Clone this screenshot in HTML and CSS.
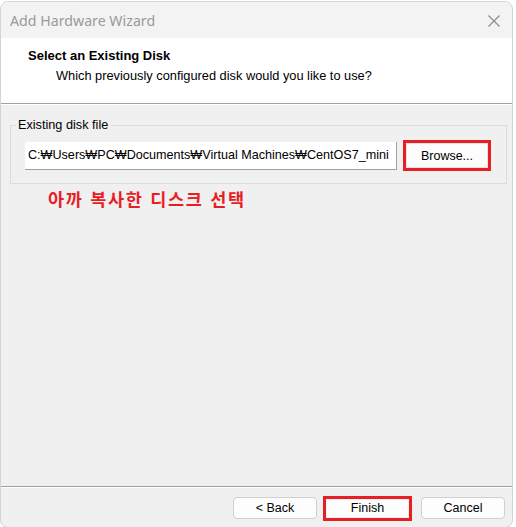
FILE: index.html
```html
<!DOCTYPE html>
<html lang="ko">
<head>
<meta charset="utf-8">
<title>Add Hardware Wizard</title>
<link rel="stylesheet" href="styles.css">
</head>
<body>
<div class="window">
  <div class="titlebar">
    <span class="title">Add Hardware Wizard</span>
    <svg class="close" width="12" height="12" viewBox="0 0 12 12"><path d="M0.5 0.5 L11.5 11.5 M11.5 0.5 L0.5 11.5" stroke="#8a8a8a" stroke-width="1.1" fill="none"/></svg>
  </div>
  <div class="header">
    <div class="h-title">Select an Existing Disk</div>
    <div class="h-sub">Which previously configured disk would you like to use?</div>
  </div>
  <div class="body">
    <fieldset class="group">
      <legend>Existing disk file</legend>
      <div class="row">
        <div class="input">C:₩Users₩PC₩Documents₩Virtual Machines₩CentOS7_mini</div>
        <div class="hl"><button class="btn browse">Browse...</button></div>
      </div>
    </fieldset>
    <div class="note">아까 복사한 디스크 선택</div>
  </div>
  <div class="footer">
    <button class="btn fbtn">&lt; Back</button>
    <div class="hl hl-finish"><button class="btn fbtn inner">Finish</button></div>
    <button class="btn fbtn cancel">Cancel</button>
  </div>
</div>
</body>
</html>
```
FILE: styles.css
```css
html, body {
  margin: 0;
  padding: 0;
  background: #ffffff;
}
body {
  width: 516px;
  height: 527px;
  overflow: hidden;
  font-family: "Liberation Sans", Arial, sans-serif;
}
.window {
  margin-top: 1px;
  width: 513px;
  height: 527px;
  box-sizing: border-box;
  border: 1px solid #d4d4d4;
  border-radius: 8px;
  overflow: hidden;
  display: flex;
  flex-direction: column;
  background: #f0f0f0;
}
.titlebar {
  height: 36px;
  flex: none;
  background: #f3f3f3;
  display: flex;
  align-items: center;
  justify-content: space-between;
  padding: 0 12px 0 9px;
}
.title {
  font-family: "Noto Sans", sans-serif;
  font-size: 14.2px;
  color: #9a9a9a;
  margin-top: 1px;
}
.close { margin-top: 1px; }
.header {
  height: 66px;
  flex: none;
  background: #ffffff;
  border-bottom: 1px solid #a0a0a0;
  box-shadow: 0 1px 0 #ffffff;
  box-sizing: border-box;
  padding: 10px 0 0 27px;
}
.h-title {
  font-weight: bold;
  font-size: 13px;
  color: #000;
  line-height: 15px;
}
.h-sub {
  font-size: 12.8px;
  color: #000;
  margin: 5px 0 0 28px;
  line-height: 15px;
}
.body {
  flex: 1;
  padding: 14px 0 0 9px;
  border-bottom: 1px solid #a0a0a0;
  box-shadow: 0 1px 0 #ffffff;
}
.group {
  margin: 0;
  width: 497px;
  height: 66px;
  box-sizing: border-box;
  border: 1px solid #dcdcdc;
  padding: 8px 0 0 14px;
}
.group legend {
  font-size: 12.7px;
  color: #000;
  padding: 0 2px;
  margin-left: -9px;
}
.row {
  display: flex;
  align-items: center;
}
.input {
  width: 372px;
  height: 28px;
  box-sizing: border-box;
  background: #ffffff;
  border-right: 1px solid #a0a0a0;
  border-bottom: 1px solid #a0a0a0;
  font-size: 12.6px;
  line-height: 27px;
  padding-left: 3px;
  white-space: nowrap;
  overflow: hidden;
  color: #000;
}
.hl {
  border: 3px solid #e81e25;
  display: flex;
}
.row .hl { margin-left: 6px; }
.btn {
  font-family: "Liberation Sans", Arial, sans-serif;
  font-size: 12.5px;
  color: #000;
  background: #fdfdfd;
  border: 1px solid #d0d0d0;
  border-radius: 2px;
  margin: 0;
  padding: 0;
}
.browse {
  width: 82px;
  height: 25px;
  border-color: #e3e3e3;
}
.note {
  font-family: "Noto Sans CJK KR", sans-serif;
  font-weight: bold;
  font-size: 17.5px;
  letter-spacing: 1.7px;
  color: #e81e25;
  margin: 3px 0 0 38px;
  line-height: 24px;
}
.footer {
  height: 40px;
  flex: none;
  display: flex;
  align-items: center;
  justify-content: flex-end;
  padding-right: 7px;
  padding-top: 2px;
  box-sizing: border-box;
}
.fbtn {
  width: 84px;
  height: 22px;
  border-radius: 4px;
}
.hl-finish {
  margin: 0 9px 0 6px;
}
.fbtn.inner {
  width: 83px;
  height: 19px;
  border-color: #f0f0f0;
  border-radius: 0;
}
```
